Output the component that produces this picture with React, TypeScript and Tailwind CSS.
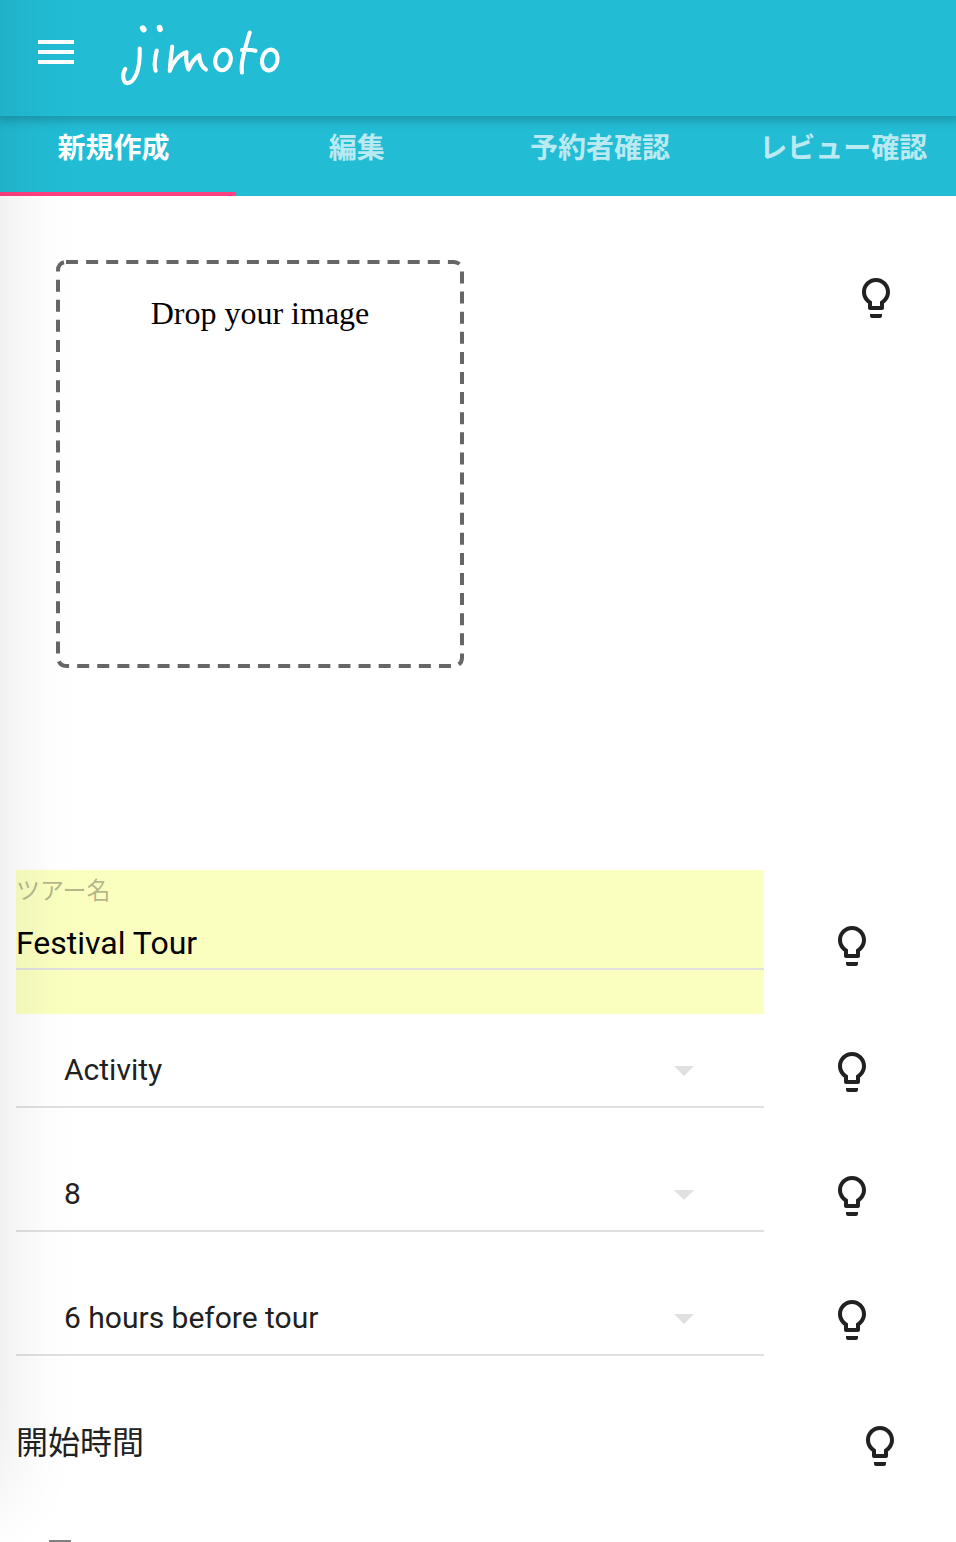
import React from "react";

const tabs = ["新規作成", "編集", "予約者確認", "レビュー確認"];
const selects = ["Activity", "8", "6 hours before tour"];

function Bulb() {
  return (
    <svg className="size-12 shrink-0 fill-[#212121]" viewBox="0 0 24 24" aria-hidden="true">
      <path d="M9 21c0 .55.45 1 1 1h4c.55 0 1-.45 1-1v-1H9v1zm3-19C8.14 2 5 5.14 5 9c0 2.38 1.19 4.47 3 5.74V17c0 .55.45 1 1 1h6c.55 0 1-.45 1-1v-2.26c1.81-1.27 3-3.36 3-5.74 0-3.86-3.14-7-7-7zm2.850 11.1l-.85.6V16h-4v-2.300l-.85-.6C7.800 12.160 7 10.630 7 9c0-2.760 2.240-5 5-5s5 2.240 5 5c0 1.630-.8 3.160-2.150 4.100z" />
    </svg>
  );
}

function Logo() {
  return (
    <svg
      className="ml-9 mt-5 h-[70px] w-[170px]"
      viewBox="116 20 170 70"
      fill="none"
      stroke="white"
      strokeWidth="4.1"
      strokeLinecap="round"
      strokeLinejoin="round"
      role="img"
      aria-label="jimoto"
    >
      <path d="M142.800 28.200l.9 1.300M159.500 27.700l.5 1.500" strokeWidth="5.8" />
      <path d="M139.700 48.500C140 62 138 73 134 78.500c-3.500 5.500-9 6.500-10.500.5-.8-3.500-.2-7 1.800-10" />
      <path d="M156.700 50.500c-1.300 6-2.200 11-2 15 .1 2.500.4 4 1 5.200" />
      <path d="M172.200 46.500c-.8 8-2.200 16-2.400 24.500 2.500-8 9.500-17 16.700-18.800-.8 6.500-.2 12 2 17.300 2.500-6 6.500-11.500 10.700-14.300.3 7 2.300 11.800 6.800 14.300" />
      <ellipse cx="223" cy="60" rx="7.700" ry="10.300" transform="rotate(14 223 60)" />
      <path d="M249.700 32.500c-4.300 15-8 26-8 34.500 0 2.500 0 4 .3 5.500M242 50c5-.5 9.500-.3 13.500.7" />
      <ellipse cx="269.800" cy="60" rx="7.700" ry="10.500" transform="rotate(12 269.800 60)" />
    </svg>
  );
}

export default function App() {
  return (
    <div className="relative h-[1542px] w-[956px] overflow-hidden bg-white font-[Roboto,'Noto_Sans_CJK_JP',sans-serif] text-[#212121]">
      <header className="relative z-10 flex h-[116px] bg-[#22bcd4] pl-8 shadow-[0_0_10px_4px_rgba(0,0,0,0.22)]">
        <svg className="mt-7 size-[48px] shrink-0 fill-white" viewBox="0 0 24 24" aria-hidden="true">
          <path d="M3 18h18v-2H3v2zm0-5h18v-2H3v2zm0-7v2h18V6H3z" />
        </svg>
        <Logo />
      </header>

      <nav className="h-20 bg-[#22bcd4]">
        <div className="-ml-2 flex h-[76px] w-[973px]">
          {tabs.map((t, i) => (
            <button
              key={t}
              className={
                "flex-1 basis-0 whitespace-nowrap pb-2.5 text-[28px] leading-10 font-bold " +
                (i === 0 ? "text-white" : "text-white/70")
              }
            >
              {t}
            </button>
          ))}
        </div>
        <div className="h-1 w-[236px] bg-[#ff4081]" />
      </nav>

      <main>
        <section className="flex h-[674px] items-start justify-between pl-14 pr-14 pt-16">
          <div className="relative size-[408px] pt-[33px] text-center font-['Liberation_Serif',serif] text-[32px] leading-10 text-black">
            <svg className="absolute inset-0 size-full" viewBox="0 0 408 408" fill="none" aria-hidden="true">
              <rect x="2" y="2" width="404" height="404" rx="8" stroke="#666" strokeWidth="4" strokeDasharray="12 8.1" />
            </svg>
            Drop your image
          </div>
          <div className="mt-3.5">
            <Bulb />
          </div>
        </section>

        <div className="flex pl-4">
          <div className="h-36 w-[748px] bg-[#faffc0]">
            <div className="h-[100px] border-b-2 border-[#e0e0e0]">
              <div className="pt-[5px] text-2xl leading-8 text-black/30">ツアー名</div>
              <div className="pt-4 text-[32px] leading-10 text-black">Festival Tour</div>
            </div>
          </div>
          <div className="ml-16 mt-[52px]">
            <Bulb />
          </div>
        </div>

        {selects.map((s) => (
          <div key={s} className="flex h-[124px] items-start pl-4">
            <div className="flex h-[94px] w-[748px] items-start justify-between border-b-2 border-[#e0e0e0] pl-12 pr-[70px] pt-9">
              <span className="text-[30px] leading-10">{s}</span>
              <svg className="mt-4 h-[10px] w-5 fill-[#e0e0e0]" viewBox="0 0 20 10" aria-hidden="true">
                <path d="M0 0h20L10 10z" />
              </svg>
            </div>
            <div className="ml-16 mt-[34px]">
              <Bulb />
            </div>
          </div>
        ))}

        <div className="flex h-[154px] items-start justify-between pl-4 pr-[52px]">
          <div className="pt-[37px] text-[32px] leading-[40px]">開始時間</div>
          <div className="mt-9">
            <Bulb />
          </div>
        </div>
        <div className="ml-[49px] h-1 w-[22px] bg-[#808080]" />
      </main>

      <div className="pointer-events-none absolute -left-[300px] -top-[200px] z-20 h-[1696px] w-[300px] shadow-[0_0_76px_rgba(0,0,0,0.11)]" />
    </div>
  );
}
